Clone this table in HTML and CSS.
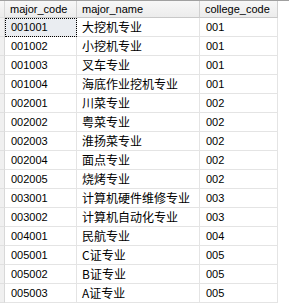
FILE: index.html
```html
<!DOCTYPE html>
<html>
<head>
<meta charset="utf-8">
<link rel="stylesheet" href="styles.css">
</head>
<body>
<div class="grid">
<table class="tbl">
<colgroup><col class="c0"><col class="c1"><col class="c2"><col class="c3"></colgroup>
<thead>
<tr><th class="gut"></th><th>major_code</th><th>major_name</th><th>college_code</th></tr>
</thead>
<tbody>
<tr class="sel"><td class="gut"></td><td class="focus">001001</td><td>大挖机专业</td><td>001</td></tr>
<tr><td class="gut"></td><td>001002</td><td>小挖机专业</td><td>001</td></tr>
<tr><td class="gut"></td><td>001003</td><td>叉车专业</td><td>001</td></tr>
<tr><td class="gut"></td><td>001004</td><td>海底作业挖机专业</td><td>001</td></tr>
<tr><td class="gut"></td><td>002001</td><td>川菜专业</td><td>002</td></tr>
<tr><td class="gut"></td><td>002002</td><td>粤菜专业</td><td>002</td></tr>
<tr><td class="gut"></td><td>002003</td><td>淮扬菜专业</td><td>002</td></tr>
<tr><td class="gut"></td><td>002004</td><td>面点专业</td><td>002</td></tr>
<tr><td class="gut"></td><td>002005</td><td>烧烤专业</td><td>002</td></tr>
<tr><td class="gut"></td><td>003001</td><td>计算机硬件维修专业</td><td>003</td></tr>
<tr><td class="gut"></td><td>003002</td><td>计算机自动化专业</td><td>003</td></tr>
<tr><td class="gut"></td><td>004001</td><td>民航专业</td><td>004</td></tr>
<tr><td class="gut"></td><td>005001</td><td>C证专业</td><td>005</td></tr>
<tr><td class="gut"></td><td>005002</td><td>B证专业</td><td>005</td></tr>
<tr><td class="gut"></td><td>005003</td><td>A证专业</td><td>005</td></tr>
</tbody>
</table>
</div>
</body>
</html>
```
FILE: styles.css
```css
html, body { margin: 0; padding: 0; background: #ffffff; }
.grid {
  width: 289px;
  height: 307px;
  overflow: hidden;
  border-top: 1px solid #a0a0a0;
  box-sizing: border-box;
  font-family: "Liberation Sans", Arial, "Noto Sans CJK SC", sans-serif;
  font-size: 11px;
  color: #000;
}
.tbl {
  border-collapse: separate;
  border-spacing: 0;
  table-layout: fixed;
  width: 278px;
}
.c0 { width: 5px; }
.c1 { width: 72px; }
.c2 { width: 123px; }
.c3 { width: 78px; }
th, td {
  padding: 0 0 0 6px;
  text-align: left;
  white-space: nowrap;
  overflow: hidden;
  border-right: 1px solid #e4e4e4;
  border-bottom: 1px solid #e4e4e4;
  font-weight: normal;
  box-sizing: border-box;
}
th {
  height: 17px;
  background: linear-gradient(#f7f7f7, #ececec);
  border-right: 1px solid #d0d0d0;
  border-bottom: 1px solid #c8c8c8;
  line-height: 16px;
  padding-left: 5px;
}
td {
  height: 19px;
  line-height: 18px;
}
td:nth-child(3) { font-family: "Noto Sans CJK SC", sans-serif; font-size: 12px; padding-left: 5px; }
.gut {
  padding: 0;
  background: #f0f0f0;
  border-right: 1px solid #d8d8d8;
  border-bottom: 1px solid #e0e0e0;
}
th.gut { background: linear-gradient(#f7f7f7, #ececec); }
.sel .focus {
  background: #eaedf1;
  outline: 1px dotted #000;
  outline-offset: -1px;
}
```
